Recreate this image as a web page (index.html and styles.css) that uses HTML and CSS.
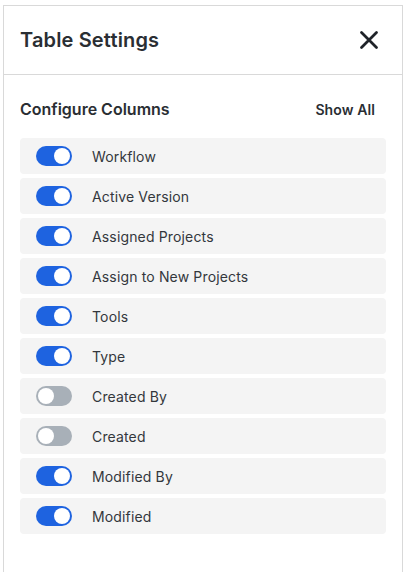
FILE: index.html
```html
<!DOCTYPE html>
<html>
<head>
<meta charset="utf-8">
<link rel="stylesheet" href="styles.css">
</head>
<body>
<div class="panel">
  <div class="header">
    <h1 class="title">Table Settings</h1>
    <button class="close" aria-label="Close">
      <svg width="20" height="20" viewBox="0 0 20 20"><path d="M2.5 2.5 L17.5 17.5 M17.5 2.5 L2.5 17.5" stroke="#1f2329" stroke-width="2.8" stroke-linecap="round" fill="none"/></svg>
    </button>
  </div>
  <div class="content">
    <div class="section-head">
      <h2 class="section-title">Configure Columns</h2>
      <button class="show-all">Show All</button>
    </div>
    <ul class="list">
      <li class="row"><span class="toggle on"></span><span class="label">Workflow</span></li>
      <li class="row"><span class="toggle on"></span><span class="label">Active Version</span></li>
      <li class="row"><span class="toggle on"></span><span class="label">Assigned Projects</span></li>
      <li class="row"><span class="toggle on"></span><span class="label">Assign to New Projects</span></li>
      <li class="row"><span class="toggle on"></span><span class="label">Tools</span></li>
      <li class="row"><span class="toggle on"></span><span class="label">Type</span></li>
      <li class="row"><span class="toggle"></span><span class="label">Created By</span></li>
      <li class="row"><span class="toggle"></span><span class="label">Created</span></li>
      <li class="row"><span class="toggle on"></span><span class="label">Modified By</span></li>
      <li class="row"><span class="toggle on"></span><span class="label">Modified</span></li>
    </ul>
  </div>
</div>
</body>
</html>
```

FILE: styles.css
```css
html, body {
  margin: 0;
  padding: 0;
  background: #ffffff;
}
body {
  font-family: Inter, "Noto Sans", sans-serif;
  color: #2a2e33;
  padding: 5px 4px 0 3px;
  height: 572px;
  box-sizing: border-box;
  overflow: hidden;
}
.panel {
  border: 1px solid #d9d9d9;
  border-bottom: none;
  height: 567px;
  box-sizing: border-box;
}
.header {
  display: flex;
  align-items: center;
  justify-content: space-between;
  height: 68px;
  padding: 0 23px 0 16px;
  border-bottom: 1px solid #d9d9d9;
}
.title {
  margin: 0;
  font-size: 20px;
  font-weight: 600;
  color: #2a2e33;
  letter-spacing: 0.15px;
}
.close {
  border: none;
  background: none;
  padding: 0;
  width: 20px;
  height: 20px;
  display: flex;
  cursor: pointer;
}
.content {
  padding: 22px 16px 0 16px;
}
.section-head {
  display: flex;
  align-items: center;
  justify-content: space-between;
  height: 24px;
  padding-right: 11px;
}
.section-title {
  margin: 0;
  font-size: 16px;
  font-weight: 600;
  color: #2a2e33;
}
.show-all {
  border: none;
  background: none;
  padding: 0;
  font-family: inherit;
  font-size: 14px;
  font-weight: 600;
  color: #2a2e33;
  letter-spacing: 0.1px;
  cursor: pointer;
}
.list {
  list-style: none;
  margin: 17px 0 0 0;
  padding: 0;
  display: flex;
  flex-direction: column;
  gap: 4px;
}
.row {
  display: flex;
  align-items: center;
  height: 36px;
  background: #f4f4f4;
  border-radius: 4px;
  padding-left: 16px;
  gap: 20px;
}
.toggle {
  position: relative;
  width: 36px;
  height: 20px;
  border-radius: 10px;
  background: #a8b0b8;
  flex: none;
}
.toggle::after {
  content: "";
  position: absolute;
  top: 2px;
  left: 2px;
  width: 16px;
  height: 16px;
  border-radius: 50%;
  background: #ffffff;
}
.toggle.on {
  background: #1e63e0;
}
.toggle.on::after {
  left: 18px;
}
.label {
  font-size: 14px;
  color: #33373c;
  letter-spacing: 0.15px;
}
```
